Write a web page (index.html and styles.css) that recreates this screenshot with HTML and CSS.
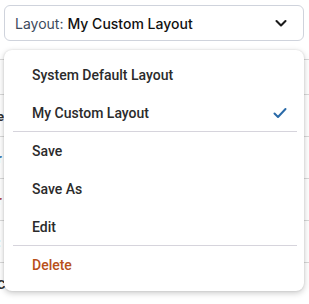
FILE: index.html
```html
<!DOCTYPE html>
<html>
<head>
<meta charset="utf-8">
<link rel="stylesheet" href="styles.css">
</head>
<body>
<div class="page">
  <div class="bg-rows">
    <div class="bg-row"></div>
    <div class="bg-row"><span class="frag dark">e</span></div>
    <div class="bg-row"><span class="frag blue">r</span></div>
    <div class="bg-row"><span class="frag red">r</span></div>
    <div class="bg-row"><span class="frag blue">:</span></div>
    <div class="bg-row"><span class="frag dark">C</span></div>
  </div>
  <button class="select">
    <span class="label">Layout:</span>
    <span class="value">My Custom Layout</span>
    <svg class="chev" width="14" height="14" viewBox="0 0 14 14"><path d="M2.5 5 L7 9.5 L11.5 5" fill="none" stroke="#1a1a1a" stroke-width="2.1" stroke-linecap="round" stroke-linejoin="round"/></svg>
  </button>
  <div class="menu">
    <div class="item">System Default Layout</div>
    <div class="item">My Custom Layout
      <svg class="check" width="14" height="12" viewBox="0 0 14 12"><path d="M1.5 6.5 L5 10 L12.5 2" fill="none" stroke="#2a6aa8" stroke-width="2" stroke-linecap="round" stroke-linejoin="round"/></svg>
    </div>
    <div class="divider"></div>
    <div class="item">Save</div>
    <div class="item">Save As</div>
    <div class="item">Edit</div>
    <div class="divider"></div>
    <div class="item danger">Delete</div>
  </div>
</div>
</body>
</html>
```
FILE: styles.css
```css
html, body { margin: 0; padding: 0; background: #fff; }
body { width: 309px; height: 304px; overflow: hidden; font-family: Roboto, "Noto Sans", sans-serif; }
.page { position: relative; width: 309px; height: 304px; }
.bg-rows { position: absolute; left: 0; top: 59px; width: 309px; }
.bg-row { height: 42px; border-top: 1px solid #d9d9d9; box-sizing: border-box; position: relative; }
.bg-row:first-child { height: 35px; }
.frag { position: absolute; left: -3px; top: 14px; font-size: 13px; font-weight: 700; }
.dark { color: #333; }
.blue { color: #2a6aa8; }
.red { color: #a33; }
.select {
  position: absolute; left: 4px; top: 5px; width: 300px; height: 36px;
  box-sizing: border-box; border: 1px solid #cfd3dc; border-radius: 6px; background: #fff;
  display: flex; align-items: center; padding: 0 0 0 10px; margin: 0;
  font-family: Inter, "Noto Sans", sans-serif; font-size: 14px; text-align: left;
}
.label { color: #3d4a5c; margin-right: 4px; }
.value { color: #111; font-weight: 500; flex: 1; }
.chev { margin-right: 15px; }
.menu {
  position: absolute; left: 4px; top: 50px; width: 300px; height: 241px;
  box-sizing: border-box; background: #fff; border-radius: 8px;
  box-shadow: 0 2px 6px rgba(0,0,0,0.22), 0 0 2px rgba(0,0,0,0.12);
  padding: 6px 0;
}
.item {
  height: 38px; display: flex; align-items: center; justify-content: space-between;
  padding: 0 17px 0 28px; font-size: 14px; font-weight: 500; color: #2b2b2b;
}
.danger { color: #b8501a; }
.divider { height: 1px; margin: -1px 7px 0 9px; background: #d6d4dc; position: relative; }
```
